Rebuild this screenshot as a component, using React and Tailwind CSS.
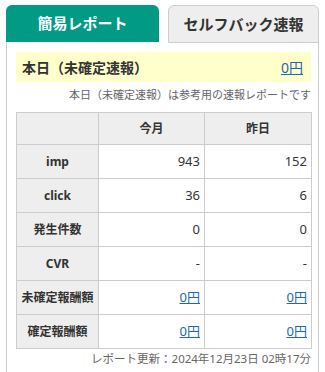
const ROWS = [
  { label: 'imp', month: '943', yesterday: '152' },
  { label: 'click', month: '36', yesterday: '6' },
  { label: '発生件数', month: '0', yesterday: '0' },
  { label: 'CVR', month: '-', yesterday: '-' },
  { label: '未確定報酬額', month: '0円', yesterday: '0円', link: true },
  { label: '確定報酬額', month: '0円', yesterday: '0円', link: true },
]

export default function App() {
  return (
    <div className="w-[325px] h-[372px] overflow-hidden bg-white text-[#333] font-['Noto_Sans','Noto_Sans_CJK_JP',sans-serif]">
      {/* tabs */}
      <div className="flex pt-[5px] pl-[6px] gap-[9px]">
        <div className="w-[153px] h-[37px] rounded-t-[6px] bg-[#009a85] text-white flex items-center justify-center text-[15px] font-bold">
          簡易レポート
        </div>
        <div className="w-[151px] h-[38px] rounded-t-[6px] bg-[#eeeeee] border border-[#cccccc] flex items-center justify-center text-[15px] font-bold text-[#333]">
          セルフバック速報
        </div>
      </div>

      {/* panel */}
      <div className="ml-[6px] w-[313px] h-[400px] border-x border-[#cccccc] pl-[9px] pr-[6px] pt-[9px]">
        <div className="w-[295px] h-[30px] bg-[#ffffcc] flex items-center justify-between pl-[6px] pr-[8px]">
          <span className="text-[14px] font-bold">本日（未確定速報）</span>
          <a href="#" className="text-[14px] text-[#2266b5] underline">0円</a>
        </div>
        <p className="w-[295px] text-right text-[11px] leading-[16px] text-[#666] mt-[5px] mb-[9px]">
          本日（未確定速報）は参考用の速報レポートです
        </p>

        <table className="w-[295px] table-fixed border-collapse text-[13px]">
          <colgroup>
            <col className="w-[82px]" />
            <col className="w-[106px]" />
            <col className="w-[107px]" />
          </colgroup>
          <thead>
            <tr className="h-[32px] bg-[#eeeeee]">
              <th className="border border-[#cccccc]"></th>
              <th className="border border-[#cccccc] text-[12px] font-bold">今月</th>
              <th className="border border-[#cccccc] text-[12px] font-bold">昨日</th>
            </tr>
          </thead>
          <tbody>
            {ROWS.map(row => (
              <tr key={row.label} className="h-[34px]">
                <th className="border border-[#cccccc] bg-[#eeeeee] text-[12px] font-bold">{row.label}</th>
                <td className="border border-[#cccccc] text-right pr-[4px]">
                  {row.link ? <a href="#" className="text-[#2266b5] underline">{row.month}</a> : row.month}
                </td>
                <td className="border border-[#cccccc] text-right pr-[4px]">
                  {row.link ? <a href="#" className="text-[#2266b5] underline">{row.yesterday}</a> : row.yesterday}
                </td>
              </tr>
            ))}
          </tbody>
        </table>

        <p className="w-[295px] text-right text-[11.5px] leading-[16px] text-[#666] mt-[2px]">
          レポート更新：2024年12月23日 02時17分
        </p>
      </div>
    </div>
  )
}
